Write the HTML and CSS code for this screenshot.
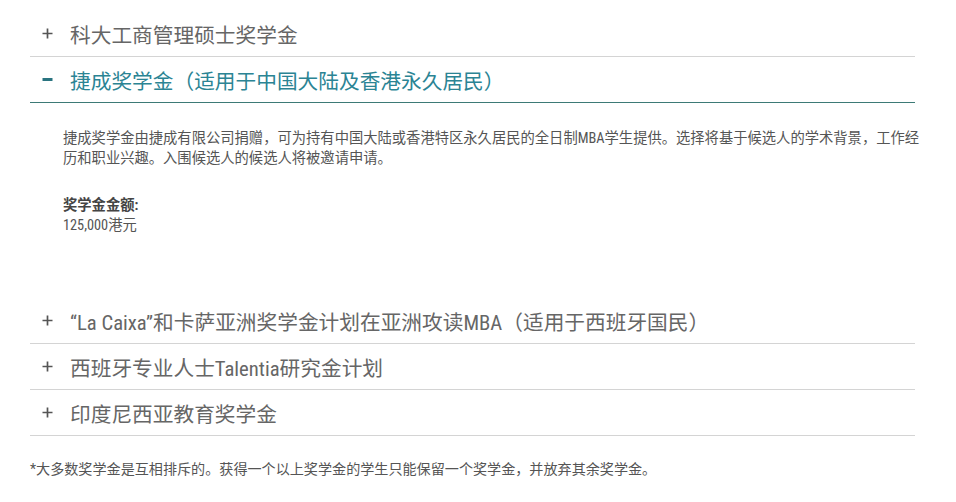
FILE: index.html
```html
<!DOCTYPE html>
<html lang="zh-CN">
<head>
<meta charset="utf-8">
<title>奖学金</title>
<link rel="stylesheet" href="styles.css">
</head>
<body>
<div class="page">
  <div class="accordion">
    <div class="item">
      <div class="head">
        <span class="icon"><svg width="11" height="11" viewBox="0 0 11 11"><path d="M5.5 0.5v10M0.5 5.5h10" stroke="#555" stroke-width="1.7"/></svg></span>
        <span class="title">科大工商管理硕士奖学金</span>
      </div>
    </div>
    <div class="item open">
      <div class="head">
        <span class="icon"><svg width="11" height="11" viewBox="0 0 11 11"><path d="M0.5 5.5h10" stroke="#2a7480" stroke-width="3"/></svg></span>
        <span class="title">捷成奖学金（适用于中国大陆及香港永久居民）</span>
      </div>
      <div class="panel">
        <p class="desc">捷成奖学金由捷成有限公司捐赠，可为持有中国大陆或香港特区永久居民的全日制<span class="lat">MBA</span>学生提供。选择将基于候选人的学术背景，工作经历和职业兴趣。入围候选人的候选人将被邀请申请。</p>
        <p class="amount"><strong>奖学金金额:</strong><br><span class="lat">125,000</span>港元</p>
      </div>
    </div>
    <div class="item">
      <div class="head">
        <span class="icon"><svg width="11" height="11" viewBox="0 0 11 11"><path d="M5.5 0.5v10M0.5 5.5h10" stroke="#555" stroke-width="1.7"/></svg></span>
        <span class="title"><span class="lat">“La Caixa”</span>和卡萨亚洲奖学金计划在亚洲攻读<span class="lat">MBA</span>（适用于西班牙国民）</span>
      </div>
    </div>
    <div class="item">
      <div class="head">
        <span class="icon"><svg width="11" height="11" viewBox="0 0 11 11"><path d="M5.5 0.5v10M0.5 5.5h10" stroke="#555" stroke-width="1.7"/></svg></span>
        <span class="title">西班牙专业人士<span class="lat">Talentia</span>研究金计划</span>
      </div>
    </div>
    <div class="item">
      <div class="head">
        <span class="icon"><svg width="11" height="11" viewBox="0 0 11 11"><path d="M5.5 0.5v10M0.5 5.5h10" stroke="#555" stroke-width="1.7"/></svg></span>
        <span class="title">印度尼西亚教育奖学金</span>
      </div>
    </div>
  </div>
  <p class="note">*大多数奖学金是互相排斥的。获得一个以上奖学金的学生只能保留一个奖学金，并放弃其余奖学金。</p>
</div>
</body>
</html>
```

FILE: styles.css
```css
html, body {
  margin: 0;
  padding: 0;
  background: #ffffff;
}
body {
  font-family: Roboto, "Noto Sans CJK SC", sans-serif;
  color: #555;
}
.page {
  padding: 11px 41px 0 30px;
}
.lat {
  font-family: "Roboto Condensed", "Liberation Sans Narrow", "DejaVu Sans Condensed", Roboto, sans-serif;
  font-stretch: condensed;
}
.item {
  border-bottom: 1px solid #d4d4d4;
}
.item.open {
  border-bottom: none;
}
.head {
  display: flex;
  align-items: center;
  height: 45px;
}
.icon {
  width: 40px;
  padding-left: 12px;
  box-sizing: border-box;
  display: flex;
  align-items: center;
}
.title {
  font-size: 20.7px;
  color: #666;
  white-space: nowrap;
}
.open .title {
  color: #2b8494;
}
.panel {
  border-top: 1px solid #3d7a76;
  padding: 25px 0 63px 33px;
  font-size: 14.3px;
  line-height: 20px;
  color: #555;
}
.desc {
  margin: 0 -8px 27px 0;
}
.amount {
  margin: 0;
}
.amount strong {
  font-weight: 700;
  color: #444;
}
.note {
  margin: 23px 0 0 0;
  font-size: 14.1px;
  line-height: 20px;
  color: #555;
}
```
